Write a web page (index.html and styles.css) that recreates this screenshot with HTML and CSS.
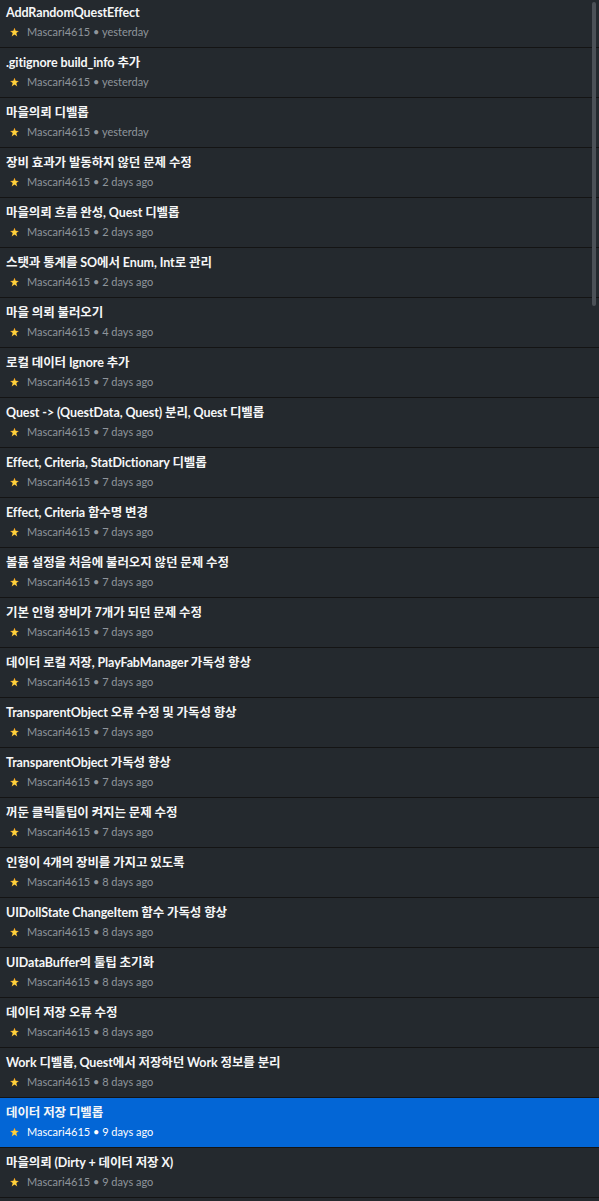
FILE: index.html
```html
<!DOCTYPE html>
<html lang="ko">
<head>
<meta charset="utf-8">
<link rel="stylesheet" href="styles.css">
</head>
<body>
<div class="history">
  <ul class="list">
    <li class="commit"><div class="title">AddRandomQuestEffect</div><div class="meta"><span class="avatar"></span><span class="by">Mascari4615 • yesterday</span></div></li>
    <li class="commit"><div class="title">.gitignore build_info 추가</div><div class="meta"><span class="avatar"></span><span class="by">Mascari4615 • yesterday</span></div></li>
    <li class="commit"><div class="title">마을의뢰 디벨롭</div><div class="meta"><span class="avatar"></span><span class="by">Mascari4615 • yesterday</span></div></li>
    <li class="commit"><div class="title">장비 효과가 발동하지 않던 문제 수정</div><div class="meta"><span class="avatar"></span><span class="by">Mascari4615 • 2 days ago</span></div></li>
    <li class="commit"><div class="title">마을의뢰 흐름 완성, Quest 디벨롭</div><div class="meta"><span class="avatar"></span><span class="by">Mascari4615 • 2 days ago</span></div></li>
    <li class="commit"><div class="title">스탯과 통계를 SO에서 Enum, Int로 관리</div><div class="meta"><span class="avatar"></span><span class="by">Mascari4615 • 2 days ago</span></div></li>
    <li class="commit"><div class="title">마을 의뢰 불러오기</div><div class="meta"><span class="avatar"></span><span class="by">Mascari4615 • 4 days ago</span></div></li>
    <li class="commit"><div class="title">로컬 데이터 Ignore 추가</div><div class="meta"><span class="avatar"></span><span class="by">Mascari4615 • 7 days ago</span></div></li>
    <li class="commit"><div class="title">Quest -&gt; (QuestData, Quest) 분리, Quest 디벨롭</div><div class="meta"><span class="avatar"></span><span class="by">Mascari4615 • 7 days ago</span></div></li>
    <li class="commit"><div class="title">Effect, Criteria, StatDictionary 디벨롭</div><div class="meta"><span class="avatar"></span><span class="by">Mascari4615 • 7 days ago</span></div></li>
    <li class="commit"><div class="title">Effect, Criteria 함수명 변경</div><div class="meta"><span class="avatar"></span><span class="by">Mascari4615 • 7 days ago</span></div></li>
    <li class="commit"><div class="title">볼륨 설정을 처음에 불러오지 않던 문제 수정</div><div class="meta"><span class="avatar"></span><span class="by">Mascari4615 • 7 days ago</span></div></li>
    <li class="commit"><div class="title">기본 인형 장비가 7개가 되던 문제 수정</div><div class="meta"><span class="avatar"></span><span class="by">Mascari4615 • 7 days ago</span></div></li>
    <li class="commit"><div class="title">데이터 로컬 저장, PlayFabManager 가독성 향상</div><div class="meta"><span class="avatar"></span><span class="by">Mascari4615 • 7 days ago</span></div></li>
    <li class="commit"><div class="title">TransparentObject 오류 수정 및 가독성 향상</div><div class="meta"><span class="avatar"></span><span class="by">Mascari4615 • 7 days ago</span></div></li>
    <li class="commit"><div class="title">TransparentObject 가독성 향상</div><div class="meta"><span class="avatar"></span><span class="by">Mascari4615 • 7 days ago</span></div></li>
    <li class="commit"><div class="title">꺼둔 클릭툴팁이 켜지는 문제 수정</div><div class="meta"><span class="avatar"></span><span class="by">Mascari4615 • 7 days ago</span></div></li>
    <li class="commit"><div class="title">인형이 4개의 장비를 가지고 있도록</div><div class="meta"><span class="avatar"></span><span class="by">Mascari4615 • 8 days ago</span></div></li>
    <li class="commit"><div class="title">UIDollState ChangeItem 함수 가독성 향상</div><div class="meta"><span class="avatar"></span><span class="by">Mascari4615 • 8 days ago</span></div></li>
    <li class="commit"><div class="title">UIDataBuffer의 툴팁 초기화</div><div class="meta"><span class="avatar"></span><span class="by">Mascari4615 • 8 days ago</span></div></li>
    <li class="commit"><div class="title">데이터 저장 오류 수정</div><div class="meta"><span class="avatar"></span><span class="by">Mascari4615 • 8 days ago</span></div></li>
    <li class="commit"><div class="title">Work 디벨롭, Quest에서 저장하던 Work 정보를 분리</div><div class="meta"><span class="avatar"></span><span class="by">Mascari4615 • 8 days ago</span></div></li>
    <li class="commit selected"><div class="title">데이터 저장 디벨롭</div><div class="meta"><span class="avatar"></span><span class="by">Mascari4615 • 9 days ago</span></div></li>
    <li class="commit"><div class="title">마을의뢰 (Dirty + 데이터 저장 X)</div><div class="meta"><span class="avatar"></span><span class="by">Mascari4615 • 9 days ago</span></div></li>
    <li class="commit blank"></li>
  </ul>
  <div class="scrollbar"></div>
</div>
</body>
</html>
```

FILE: styles.css
```css
html, body {
  margin: 0;
  padding: 0;
  background: #24292e;
  height: 100%;
  overflow: hidden;
}
.history {
  position: relative;
  height: 1201px;
  overflow: hidden;
  font-family: "Lato", "Noto Sans CJK KR", sans-serif;
}
.list {
  list-style: none;
  margin: -2px 0 0 0;
  padding: 0;
}
.commit {
  height: 49px;
  border-bottom: 1px solid #141414;
  box-sizing: content-box;
  padding: 0 0 0 6px;
  display: flex;
  flex-direction: column;
}
.title {
  margin-top: 6px;
  height: 18px;
  line-height: 18px;
  font-size: 12.5px;
  font-weight: 700;
  letter-spacing: -0.1px;
  color: #f5f6f7;
  white-space: nowrap;
}
.meta {
  margin-top: 2px;
  height: 16px;
  display: flex;
  align-items: center;
  gap: 8px;
  padding-left: 4px;
}
.avatar {
  width: 9px;
  height: 9px;
  background: radial-gradient(circle at 50% 55%, #ffd23c 0 30%, #f39a1c 65%, #b9600c 100%);
  clip-path: polygon(50% 0%, 63% 36%, 100% 38%, 70% 60%, 81% 100%, 50% 77%, 19% 100%, 30% 60%, 0% 38%, 37% 36%);
}
.by {
  font-size: 11px;
  line-height: 16px;
  color: #8f959c;
  white-space: nowrap;
}
.selected {
  background: #0366d6;
}
.selected .by {
  color: #ffffff;
}
.scrollbar {
  position: absolute;
  top: 2px;
  left: 592px;
  width: 4px;
  height: 304px;
  border-radius: 2px;
  background: #4c5157;
}
```
